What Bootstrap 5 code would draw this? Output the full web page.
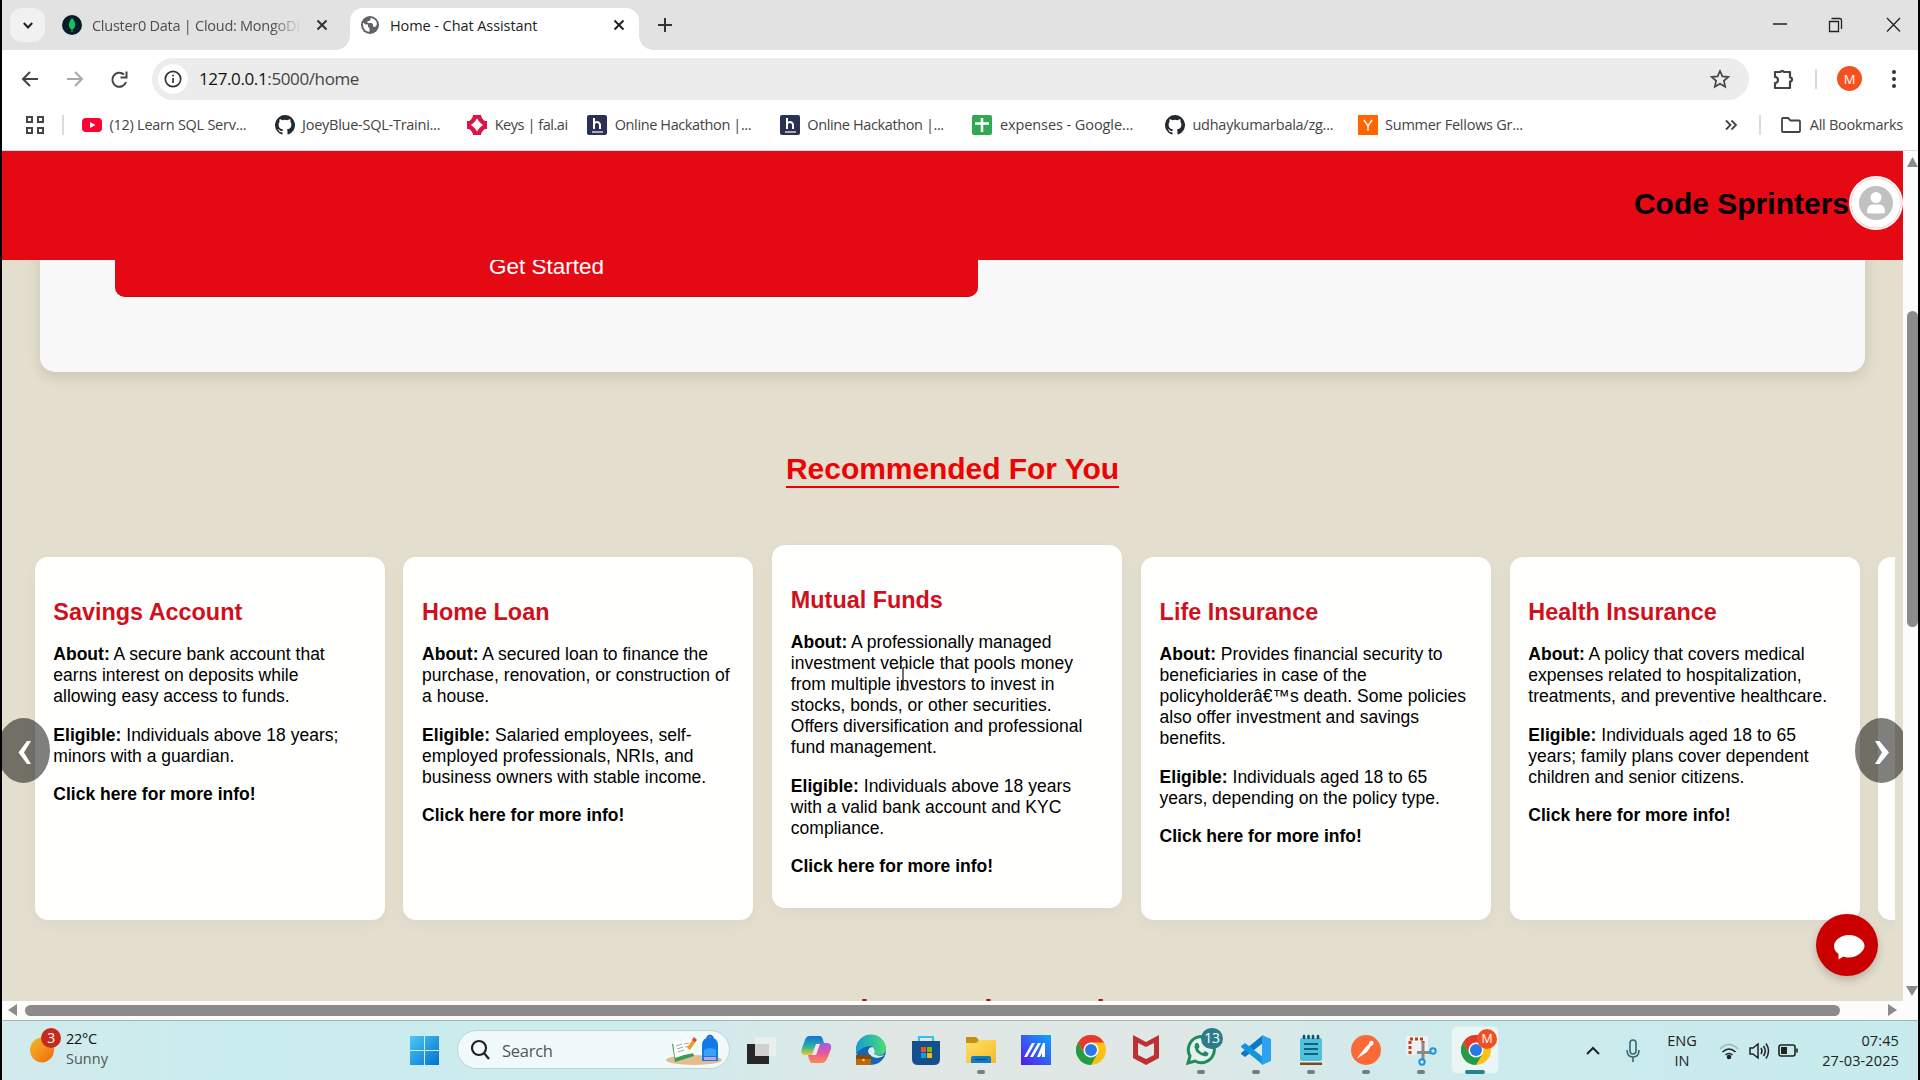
<!DOCTYPE html>
<html lang="en">
<head>
<meta charset="utf-8">
<title>Home - Chat Assistant</title>
<link rel="stylesheet" href="https://cdn.jsdelivr.net/npm/bootstrap@5.3.0/dist/css/bootstrap.min.css">
<script src="https://cdn.jsdelivr.net/npm/bootstrap@5.3.0/dist/js/bootstrap.bundle.min.js"></script>
<style>
body{width:1920px;height:1080px;overflow:hidden;background:#000;font-family:"Open Sans","Noto Sans",sans-serif;color:#333;font-size:15px;line-height:20px}
svg{display:block;flex:none;overflow:visible}
.screen{height:1080px;padding:0 2px;overflow:hidden}
.ui{font-size:14.5px;letter-spacing:-.26px;white-space:nowrap}
.tabs{height:50px;background:#e2e2e2}
.chev{width:35px;height:34px;margin:8px 0 0 8px;border-radius:12px;background:#f1f1f1}
.tab-idle{width:305px;padding-left:17px;height:34px;margin-top:8px}
.tab-title{width:210px;margin-left:10px;padding-top:1px;overflow:hidden;-webkit-mask-image:linear-gradient(90deg,#000 180px,transparent 209px);color:#4d4d4d}
.tab-on{position:relative;width:289px;height:42px;margin-top:8px;padding:0 11px 8px;background:#fff;border-radius:13px 13px 0 0;color:#222}
.tab-on span{margin-left:11px;padding-top:1px;letter-spacing:-.08px}
.tab-on:before,.tab-on:after{content:"";position:absolute;bottom:0;width:14px;height:14px}
.tab-on:before{left:-14px;background:radial-gradient(circle at 0 0,transparent 13.5px,#fff 14px)}
.tab-on:after{right:-14px;background:radial-gradient(circle at 100% 0,transparent 13.5px,#fff 14px)}
.tools{height:58px;background:#fff;padding-left:19px}
.url{width:1597px;height:42px;border-radius:21px;background:#ececec;margin-left:23px;padding:0 19px 0 6px}
.infoc{width:30px;height:30px;border-radius:50%;background:#fff}
.urltext{font-size:17px;letter-spacing:-.38px;margin-left:11px;padding-top:1px;color:#444}
.vsep{width:2px;height:20px;background:#dcdcdc}
.ava{width:25px;height:25px;border-radius:50%;background:#f4511e;color:#fff;font-size:13px}
.marks{height:43px;background:#fff;border-bottom:1px solid #ddd;color:#444;padding-bottom:7px}
.bm{width:192.6px;gap:7.5px}
.web{height:870px}
.site{width:1901px;height:850px;background:#e4dece;overflow:hidden;font-family:"Liberation Sans",Arial,sans-serif;color:#000}
.brandbar{position:relative;z-index:2;height:109px;background:#e50914;font-weight:700;font-size:30px;padding-bottom:5px}
.brandbar span{padding-top:2px}
.usr{width:54px;height:54px;border-radius:50%;background:#fff}
.hero{height:132px;width:1825px;margin:-20px 0 0 38px;padding-left:75px;background:#f8f8f9;border-radius:0 0 15px 15px;box-shadow:0 5px 14px rgba(60,70,20,.15)}
.cta{width:863px;height:57px;border-radius:10px;background:#e50914;color:#fff;font-size:22.5px;line-height:26px;padding:14px 0 15px;border:0;border-bottom:1px solid #b5101a;display:block}
.sect{font-size:30px;line-height:34px;font-weight:700;color:#ec0404;margin:0 auto;width:max-content}
.sect-main{margin-top:80px;border-bottom:2px solid #ec0000;letter-spacing:-.05px}
.strip{position:relative;height:453px;margin-top:29px}
.rail{height:453px;margin-right:8px;padding:40px 0 0 32.6px;gap:18.75px;overflow:hidden}
.prod{flex:none;width:350px;height:363px;border-radius:13px;background:#fffffd;padding:41px 18.75px 0;box-shadow:0 5px 12px rgba(190,190,190,.2);font-size:17.5px;line-height:21px}
.prod.up{transform:translateY(-12px)}
.prod h3{font-size:23.4px;line-height:28px;font-weight:700;color:#d0101c;margin:0 0 18.1px}
.prod p{margin:0 0 17.5px}
.nav-o{position:absolute;top:201px;width:53px;height:65px;border-radius:50%;background:rgba(0,0,0,.5)}
.nav-l{left:-5px}.nav-r{left:1853px}
.sect-next{margin-top:24px;color:#b00c12;letter-spacing:1.75px}
.vbar{width:15px;height:850px;background:#fcfcfc}
.hbar{height:19px;background:#fcfcfa}
.vthumb{width:11px;height:316px;border-radius:6px;background:#8b8b8b}
.hthumb{width:1815px;height:11px;border-radius:6px;background:#8b8b8b}
.chatb{position:absolute;left:1816px;top:914px;width:62px;height:62px;border-radius:50%;background:#ca0000;box-shadow:0 4px 8px rgba(0,0,0,.2);z-index:5}
.beam{position:absolute;left:896px;top:666px;z-index:5}
.task{height:60px;border-top:1px solid #98b9ba;background:linear-gradient(90deg,#d2eaec 0,#c9ecee 12%,#cdecee 32%,#e0e7e5 47%,#dfe8e6 60%,#ccebed 78%,#c7ebed 100%);color:#222}
.weather{position:relative;width:380px;padding:6px 0 0 28px}
.pill{position:absolute;border-radius:50%;color:#fff;text-align:center}
.find{width:273px;height:39px;border-radius:20px;background:#f1fafa;border:1px solid #c0d2d2;padding:0 6px 0 13px;margin:9px 0 0 18px}
.find span{font-size:16.5px;color:#555;margin-left:12px;padding-top:2px}
.app{position:relative;width:55px;height:59px;padding-top:14px}
.app.run:after{content:"";position:absolute;left:23.5px;top:49px;width:8px;height:4px;border-radius:2px;background:#6f8083}
.app.focus:before{content:"";position:absolute;left:3px;top:5px;width:48px;height:48px;border-radius:6px;background:#eaf6f6;border:1px solid #d8ecec}
.app.focus:after{left:17px;width:20px;background:#278290}
.app svg{position:relative;margin:0 auto}
.ico{width:30px;height:30px}
.clock{width:81px;margin-left:19px;letter-spacing:.12px}
</style>
</head>
<body>
<svg width="0" height="0" class="position-absolute"><defs>
<symbol id="gh" viewBox="0 0 16 16"><path fill="#24292f" d="M8 0a8 8 0 0 0-2.53 15.59c.4.07.55-.17.55-.38v-1.49C3.78 14.2 3.3 12.78 3.3 12.78c-.36-.92-.89-1.17-.89-1.17-.73-.5.05-.49.05-.49.8.06 1.23.83 1.23.83.72 1.23 1.88.87 2.34.66.07-.52.28-.87.5-1.07-1.77-.2-3.64-.89-3.64-3.95 0-.87.31-1.59.82-2.15-.08-.2-.36-1.02.08-2.12 0 0 .67-.21 2.2.82a7.6 7.6 0 0 1 4 0c1.53-1.04 2.2-.82 2.2-.82.44 1.1.16 1.92.08 2.12.51.56.82 1.27.82 2.15 0 3.07-1.87 3.75-3.65 3.95.29.25.54.73.54 1.48v2.19c0 .21.15.46.55.38A8 8 0 0 0 8 0z"/></symbol>
<symbol id="chrome" viewBox="0 0 30 30"><circle cx="15" cy="15" r="15" fill="#fbc116"/><path fill="#e33b2e" d="M2 7.5A15 15 0 0 1 28 7.5H15L8.5 18.700z"/><path fill="#249b48" d="M2 7.500A15 15 0 0 0 15 30l6.500-11.250L15 22 8.500 18.700z"/><circle cx="15" cy="15" r="7.500" fill="#fff"/><circle cx="15" cy="15" r="6" fill="#2b77e8"/></symbol>
<linearGradient id="gw" x2="1" y2="1"><stop stop-color="#4cc8f6"/><stop offset="1" stop-color="#0072ce"/></linearGradient>
<linearGradient id="gs" x2="1" y2="1"><stop stop-color="#f7b92d"/><stop offset="1" stop-color="#ec6a0c"/></linearGradient>
<linearGradient id="gc1" x2="0" y2="1"><stop stop-color="#176ee0"/><stop offset=".55" stop-color="#23b3a0"/><stop offset="1" stop-color="#f1c82b"/></linearGradient>
<linearGradient id="gc2" x2="0" y2="1"><stop stop-color="#9b5ce8"/><stop offset=".5" stop-color="#e6599c"/><stop offset="1" stop-color="#fb8d4e"/></linearGradient>
<linearGradient id="ge" x2="1" y2="0"><stop stop-color="#159ad8"/><stop offset="1" stop-color="#4ede6c"/></linearGradient>
<linearGradient id="gm" x1="0" y1="1" x2="1" y2="0"><stop stop-color="#5a18e8"/><stop offset="1" stop-color="#0aa8ff"/></linearGradient>
<linearGradient id="gf" x2="1" y2="1"><stop stop-color="#ffdf6b"/><stop offset="1" stop-color="#f6bb24"/></linearGradient>
</defs></svg>
<div class="screen d-flex flex-column">
  <div class="tabs ui d-flex flex-none">
    <div class="chev d-flex align-items-center justify-content-center"><svg width="10" height="7" fill="none" stroke="#222" stroke-width="2"><path d="M.8 1 5 5.500 9.200 1"/></svg></div>
    <div class="tab-idle d-flex align-items-center">
      <svg width="20" height="20" viewBox="0 0 20 20"><circle cx="10" cy="10" r="10" fill="#061d2a"/><path d="M10 3c5 5 3.500 10 .5 11.500V17h-1v-2.500C6.500 13 5.500 8 10 3z" fill="#13c45c"/></svg>
      <div class="tab-title">Cluster0 Data | Cloud: MongoDB</div>
      <svg width="10" height="10" style="margin-left:15px" stroke="#333" stroke-width="2"><path d="M.5.5l9 9M9.500.5l-9 9"/></svg>
    </div>
    <div class="tab-on d-flex align-items-center">
      <svg width="18" height="18" viewBox="0 0 18 18"><circle cx="9" cy="9" r="9" fill="#5f6368"/><path d="M2 6.500l2.500 2H7v2.500l1.500 1v3.800C4 15.500 1.500 12 2 6.500zM9.500 2v2L8 5H6.500v2h4L12 8.500v2l2 .5 1.500-1.500C17 6 14 2.500 9.500 2z" fill="#fff"/></svg>
      <span>Home - Chat Assistant</span>
      <svg class="ms-auto" width="10" height="10" style="margin-right:4px" stroke="#222" stroke-width="2"><path d="M.5.5l9 9M9.500.5l-9 9"/></svg>
    </div>
    <svg width="14" height="14" style="margin:18px 0 0 19px" stroke="#333" stroke-width="2"><path d="M7 0v14M0 7h14"/></svg>
    <svg width="140" height="16" class="ms-auto" style="margin:17px 13px 0 0" fill="none" stroke="#222" stroke-width="1.300"><path d="M8 7h14M64.500 4.500h9v10h-9zM66.500 1.500h8q2 0 2 2v8.500M122 1l13 13.500M135 1l-13 13.500"/></svg>
  </div>
  <div class="tools d-flex align-items-center">
    <svg width="108" height="18" fill="none" stroke="#444" stroke-width="2"><path d="M17 9H3M9 2 2 9l7 7"/><path stroke="#a8a8a8" d="M46 9h14M54 2l7 7-7 7"/><path d="M103 4.500A7 7 0 1 0 105 12M105.500 1.500v6h-6"/></svg>
    <div class="url d-flex align-items-center">
      <div class="infoc d-flex align-items-center justify-content-center"><svg width="18" height="18" fill="none" stroke="#333" stroke-width="1.700"><circle cx="9" cy="9" r="7.700"/><path d="M9 8v5M9 4.800v1.700"/></svg></div>
      <div class="urltext text-nowrap"><span style="color:#111">127.0.0.1</span>:5000/home</div>
      <svg class="ms-auto" width="20" height="20" viewBox="0 0 20 20" fill="none" stroke="#444" stroke-width="1.700"><path d="M10 2l2.400 5.400 5.900.6-4.400 3.900 1.300 5.800L10 14.700l-5.200 3 1.300-5.800L1.700 8l5.900-.6z"/></svg>
    </div>
    <svg width="21" height="21" style="margin-left:24px" fill="none" stroke="#444" stroke-width="2.200"><path d="M2 4h5.500a2 2 0 0 1 3.500 0H17v5.500a2 2 0 0 1 0 4V20H2v-5a3 3 0 0 0 0-6z" stroke-linejoin="round"/></svg>
    <div class="vsep" style="margin-left:21px"></div>
    <div class="ava d-flex align-items-center justify-content-center" style="margin-left:20px">M</div>
    <svg width="4" height="18" style="margin-left:30px" fill="#333"><circle cx="2" cy="2" r="2"/><circle cx="2" cy="9" r="2"/><circle cx="2" cy="16" r="2"/></svg>
  </div>
  <div class="marks ui d-flex align-items-center">
    <svg width="18" height="18" style="margin-left:24px" fill="none" stroke="#444" stroke-width="2"><path d="M1 1h5v5H1zM12 1h5v5h-5zM1 12h5v5H1zM12 12h5v5h-5z"/></svg>
    <div class="vsep" style="margin:0 18px"></div>
    <div class="bm d-flex align-items-center"><svg width="20" height="20"><rect y="3" width="20" height="14" rx="4" fill="#ff0033"/><path d="M8 7l5.500 3L8 13z" fill="#fff"/></svg>(12) Learn SQL Serv...</div>
    <div class="bm d-flex align-items-center"><svg width="20" height="20"><use href="#gh"/></svg>JoeyBlue-SQL-Traini...</div>
    <div class="bm d-flex align-items-center" style="width:120px;letter-spacing:-.45px"><svg width="20" height="20" viewBox="0 0 20 20"><path fill="#dd1547" fill-rule="evenodd" d="M6 0h8q.5 4 4 6h2v8h-2q-3.500 2-4 6H6q-.5-4-4-6H0V6h2q3.500-2 4-6zm4 3.500Q8 7.500 4 10q4 2.500 6 6.500 2-4 6-6.500-4-2.500-6-6.500z"/></svg>Keys | fal.ai</div>
    <div class="bm d-flex align-items-center" style="letter-spacing:-.38px"><svg width="20" height="20" fill="none" stroke="#fff" stroke-width="2"><rect width="20" height="20" rx="2" fill="#2a3152" stroke="none"/><path d="M7 3v11M7 9q1-2 3-2t3 2.500V14"/><path d="M5 17h11" stroke-width="1.200"/></svg>Online Hackathon |...</div>
    <div class="bm d-flex align-items-center" style="letter-spacing:-.38px"><svg width="20" height="20" fill="none" stroke="#fff" stroke-width="2"><rect width="20" height="20" rx="2" fill="#2a3152" stroke="none"/><path d="M7 3v11M7 9q1-2 3-2t3 2.500V14"/><path d="M5 17h11" stroke-width="1.200"/></svg>Online Hackathon |...</div>
    <div class="bm d-flex align-items-center" style="letter-spacing:-.08px"><svg width="20" height="20"><rect width="20" height="20" rx="2" fill="#31a851"/><path d="M10 3v14M3 8.500h14" stroke="#fff" stroke-width="2.500"/></svg>expenses - Google...</div>
    <div class="bm d-flex align-items-center"><svg width="20" height="20"><use href="#gh"/></svg>udhaykumarbala/zg...</div>
    <div class="bm d-flex align-items-center"><svg width="20" height="20"><rect width="20" height="20" fill="#ff6600"/><path d="M6 5l4 6 4-6M10 11v5" fill="none" stroke="#fff" stroke-width="1.400"/></svg>Summer Fellows Gr...</div>
    <svg width="12" height="10" class="ms-auto" fill="none" stroke="#444" stroke-width="1.800"><path d="M1 .5 5.500 5 1 9.500M6.500.5 11 5l-4.500 4.500"/></svg>
    <div class="vsep" style="margin:0 20px 0 22px"></div>
    <svg width="20" height="16" fill="none" stroke="#444" stroke-width="1.800"><path d="M1 2q0-1 1-1h5l2.500 2.500H18q1 0 1 1V14q0 1-1 1H2q-1 0-1-1z"/></svg>
    <span style="margin:0 15px 0 9px">All Bookmarks</span>
  </div>
  <div class="web d-flex flex-column">
    <div class="d-flex">
      <main class="site">
        <header class="brandbar d-flex align-items-center justify-content-end"><span>Code Sprinters</span>
          <div class="usr"><svg width="54" height="54"><circle cx="27" cy="27" r="25" fill="none" stroke="#f5b5b8" stroke-width=".7"/><circle cx="27" cy="27" r="17" fill="#c1c1c1"/><circle cx="27" cy="21.500" r="5.500" fill="#fff"/><path d="M18 37q-.5-8.500 6-8.500h6q6.500 0 6 8.500-9 1-18 0z" fill="#fff"/></svg></div>
        </header>
        <section class="hero"><button class="cta text-center">Get Started</button></section>
        <h2 class="sect sect-main">Recommended For You</h2>
        <div class="strip">
          <div class="rail d-flex">
            <article class="prod"><h3>Savings Account</h3><p><b>About:</b> A secure bank account that earns interest on deposits while allowing easy access to funds.</p><p><b>Eligible:</b> Individuals above 18 years; minors with a guardian.</p><p><b>Click here for more info!</b></p></article>
            <article class="prod"><h3>Home Loan</h3><p><b>About:</b> A secured loan to finance the purchase, renovation, or construction of a house.</p><p><b>Eligible:</b> Salaried employees, self-employed professionals, NRIs, and business owners with stable income.</p><p><b>Click here for more info!</b></p></article>
            <article class="prod up"><h3>Mutual Funds</h3><p><b>About:</b> A professionally managed investment vehicle that pools money from multiple investors to invest in stocks, bonds, or other securities. Offers diversification and professional fund management.</p><p><b>Eligible:</b> Individuals above 18 years with a valid bank account and KYC compliance.</p><p><b>Click here for more info!</b></p></article>
            <article class="prod"><h3>Life Insurance</h3><p><b>About:</b> Provides financial security to beneficiaries in case of the policyholderâ€™s death. Some policies also offer investment and savings benefits.</p><p><b>Eligible:</b> Individuals aged 18 to 65 years, depending on the policy type.</p><p><b>Click here for more info!</b></p></article>
            <article class="prod"><h3>Health Insurance</h3><p><b>About:</b> A policy that covers medical expenses related to hospitalization, treatments, and preventive healthcare.</p><p><b>Eligible:</b> Individuals aged 18 to 65 years; family plans cover dependent children and senior citizens.</p><p><b>Click here for more info!</b></p></article>
            <article class="prod"></article>
          </div>
          <div class="nav-o nav-l"><svg width="53" height="65"><path d="M30 23h4L27 34.500l7 11.500h-4L21.500 34.500z" fill="#fff"/></svg></div>
          <div class="nav-o nav-r"><svg width="53" height="65"><path d="M24.500 23h-4.500L27 34.500l-7 11.500h4.500L34 34.500z" fill="#fff"/></svg></div>
        </div>
        <h2 class="sect sect-next">Trendy Brands Hotels</h2>
      </main>
      <div class="vbar d-flex flex-column align-items-center"><svg width="11" height="10" style="margin:6px 0 0 3px" fill="#8b8b8b"><path d="M5.500 0 11 10H0z"/></svg><div class="vthumb" style="margin:144px 0 0 4px"></div><svg width="12" height="10" class="mt-auto" style="margin:0 0 5px 2px" fill="#8b8b8b"><path d="M0 0h12L6 10z"/></svg></div>
    </div>
    <div class="hbar d-flex align-items-center"><svg width="10" height="12" style="margin:0 7px 0 6px" fill="#8b8b8b"><path d="M9 0v12L0 6z"/></svg><div class="hthumb"></div><svg width="10" height="12" style="margin-left:48px" fill="#8b8b8b"><path d="M0 0v12l9-6z"/></svg></div>
  </div>
  <div class="task ui d-flex">
    <div class="weather d-flex">
      <svg width="24" height="30" style="margin-top:8px"><ellipse cx="12" cy="15" rx="12" ry="12.500" fill="url(#gs)"/></svg>
      <span class="pill" style="left:39px;top:7px;width:20px;height:20px;background:#c42b1c;font-size:14px;line-height:19px">3</span>
      <div style="margin:2px 0 0 12px"><div style="color:#111">22°C</div><div style="color:#555;letter-spacing:0">Sunny</div></div>
    </div>
    <svg width="29" height="29" style="margin:15px 0 0 28px" fill="url(#gw)"><path d="M0 0h14v14H0zM15 0h14v14H15zM0 15h14v14H0zM15 15h14v14H15z"/></svg>
    <div class="find d-flex align-items-center">
      <svg width="19" height="20" fill="none" stroke="#222" stroke-width="2.200"><circle cx="8" cy="8" r="7"/><path d="M13 13l5 6"/></svg><span>Search</span>
      <svg class="ms-auto" width="57" height="30" viewBox="0 0 57 30"><ellipse cx="28" cy="25" rx="28" ry="5" fill="#e5bd8d"/><path d="M6 9l17-4 5 16-19 6z" fill="#3b9a55"/><path d="M7 7l8-1 9-3 4 15-10 2-9 3z" fill="#fff"/><path d="M10 11l6-2M11 14l6-2M18 9l5-1M19 12l5-1M12 17l6-2" stroke="#9aa" /><path d="M21 13 27 4l3 2-6 9z" fill="#f59a23"/><path d="M26 5l2-3 3 3-2 2z" fill="#e0443b"/><path d="M36 26V10q0-7 8-8 8 1 8 8v16z" fill="#1279e8"/><path d="M38 15q6-4 12 0v6H38z" fill="#39a2f8"/><path d="M38 22h12v3H38z" fill="#b6a7f5"/><path d="M41 3q3-5 6 0" stroke="#2a5fb8" stroke-width="2" fill="none"/></svg>
    </div>
    <div class="d-flex" style="margin-left:3px">
      <div class="app"><svg class="ico"><path d="M1 9h22v20H1z" fill="#272727"/><path d="M9 2h21v19H9z" fill="#eee" opacity=".85"/></svg></div>
      <div class="app"><svg class="ico" viewBox="0 0 30 30"><path fill="url(#gc1)" d="M9 1h10q2 0 3 4l1 3h-3q-3 0-4 3l-3 9H3Q-1 20 1 13l3-8Q5 1 9 1z"/><path fill="url(#gc2)" d="M21 28H11q-2 0-3-4l-1-4h4q3 0 4-3l2-9h9q5 0 4 6l-4 10q-2 4-5 4z"/><path d="M15 9h4l-4 11h-4z" fill="#f3e8ef"/></svg></div>
      <div class="app"><svg class="ico" viewBox="0 0 30 30"><circle cx="15" cy="15" r="15" fill="#1466b5"/><path fill="url(#ge)" d="M0 15A15 15 0 0 1 30 14q0 6-7 6-5 0-5-2 2-6-3-7Q6 11 0 19z"/><path d="M12 17q0-5 5-5 3 4 1 7 4 3 11 1-4 3-8 3-7-1-9-6z" fill="#d9eef2"/><path d="M0 20h15v10H0z" fill="#b96a0c"/><path d="M0 20h15v4H0z" fill="#8c4a08"/><circle cx="7.500" cy="25" r="1.300" fill="#ffd45c"/></svg></div>
      <div class="app"><svg class="ico"><path d="M8 6V2h14v4" fill="none" stroke="#36c0f4" stroke-width="2.200"/><path d="M1 6h28v18q0 6-6 6H7q-6 0-6-6z" fill="#15508c"/><path d="M10 12h5v5h-5z" fill="#f25022"/><path d="M16 12h5v5h-5z" fill="#7fba00"/><path d="M10 18h5v5h-5z" fill="#00a4ef"/><path d="M16 18h5v5h-5z" fill="#ffb900"/></svg></div>
      <div class="app run"><svg class="ico"><path d="M0 2h10l3 3v6H0z" fill="#c48f0e"/><path d="M0 8h10l3-3h17v23H0z" fill="url(#gf)"/><path d="M5 28v-5q0-2 2-2h16q2 0 2 2v5z" fill="#127bc8"/><path d="M9 24.500h12" stroke="#0b4f87" stroke-width="1.500"/></svg></div>
      <div class="app"><svg class="ico"><path d="M0 0h30v30H0z" fill="url(#gm)"/><path d="M3 22h3l8-14h-3zM9 22h3l8-14h-3zM16 22h3l2-4v4h3V8h-2z" fill="#fff"/></svg></div>
      <div class="app"><svg class="ico"><use href="#chrome"/></svg></div>
      <div class="app"><svg class="ico"><path d="M2 0l13 7L28 0v23l-13 7L2 23zM7 8v12l8 4 8-4V8l-8 4z" fill="#bd3034" fill-rule="evenodd"/></svg></div>
      <div class="app run"><svg class="ico" viewBox="0 0 30 30"><path d="M2 28l2-7A13 13 0 1 1 9 26z" fill="#e6f1ee" stroke="#228b5a" stroke-width="3"/><path d="M10 8q2-1 3 2l.5 2-1.500 2q2 3 5 4l2-2 3.500 2q0 3-3 3.500Q10 20 8.500 12 8.500 9 10 8z" fill="#228b5a"/></svg><span class="pill" style="left:28px;top:7px;width:22px;height:21px;border-radius:11px;background:#2b7d8c;font-size:14px;line-height:20px">13</span></div>
      <div class="app run"><svg class="ico" viewBox="0 0 30 30"><path d="M22 0v8L4 22l-4-3v-1z" fill="#0b78c4"/><path d="M22 30v-8L4 8l-4 3v1z" fill="#1794de"/><path d="M21 0l9 4v22l-9 4z" fill="#2ba3ee"/></svg></div>
      <div class="app run"><svg class="ico" viewBox="0 0 30 30"><path d="M4 25h22v5H4z" fill="#7a4a21"/><path d="M4 25h22v2.500H4z" fill="#eee"/><rect x="4" y="3" width="22" height="23" rx="2" fill="#50c1dd"/><path d="M8 9h14M8 14h14M8 19h14" stroke="#125f7d" stroke-width="2"/><path d="M8 1v2M12.500 1v2M17 1v2M22 1v2" stroke="#164f69" stroke-width="2.600" stroke-linecap="round"/></svg></div>
      <div class="app run"><svg class="ico"><circle cx="15" cy="15" r="15" fill="#fb6a36"/><path d="M6 23l8-10 4-4q0-4 4-3 2 3-2 5l-4 6-9 6z" fill="#fff"/></svg></div>
      <div class="app run"><svg class="ico"><path d="M0 1h22v19H0z" fill="#eef2f2"/><path d="M4 19V4h13v4" fill="none" stroke="#c33c1e" stroke-width="3" stroke-dasharray="3 2"/><path d="M17 7v18M11 17.500h14" stroke="#888" stroke-width="3"/><circle cx="27" cy="16" r="2.700" fill="none" stroke="#1b97de" stroke-width="2"/><circle cx="16" cy="27" r="2.700" fill="none" stroke="#1b97de" stroke-width="2"/></svg></div>
      <div class="app run focus"><svg class="ico"><use href="#chrome"/></svg><span class="pill" style="left:29px;top:8px;width:20px;height:20px;background:#f0501f;font-size:12.500px;line-height:20px">M</span></div>
    </div>
    <div class="d-flex align-items-center ms-auto" style="padding-right:19px">
      <svg width="14" height="9" fill="none" stroke="#222" stroke-width="2"><path d="M1 8l6-6 6 6"/></svg>
      <svg width="14" height="24" style="margin:0 26px" fill="none" stroke="#35686e" stroke-width="1.600"><rect x="4" y="1" width="6" height="14" rx="3"/><path d="M1 11q0 7 6 7t6-7M7 18v5"/></svg>
      <div class="text-center" style="width:32px;line-height:20px;margin-right:21px;letter-spacing:0">ENG<br>IN</div>
      <svg width="20" height="16" fill="none" stroke="#222" stroke-width="1.600"><path d="M1 6q9-9 18 0" stroke="#9cb4b6"/><path d="M3.500 9q6.500-6 13 0M6.500 12q3.500-3 7 0"/><circle cx="10" cy="14" r="1.500" fill="#222"/></svg>
      <svg width="20" height="18" style="margin:0 9px 0 10px" fill="none" stroke="#222" stroke-width="1.500"><path d="M1 6h3l5-4v14l-5-4H1zM12 6q2 3 0 6M14.500 4q3.500 5 0 10M17 1.500q5 7.500 0 15"/></svg>
      <svg width="21" height="13" fill="none" stroke="#222" stroke-width="1.600"><rect x="1" y="1" width="16" height="11" rx="2"/><path d="M3 3h6v7H3z" fill="#222" stroke="none"/><path d="M19 4.500v4"/></svg>
      <div class="clock text-end">07:45<br>27-03-2025</div>
    </div>
  </div>
</div>
<div class="chatb"><svg width="62" height="62"><path d="M33 21c9 0 15.500 6 15.500 11S41 43.500 33 43.500c-2 0-4-.4-5.500-1l-5 3v-5.500c-3-2-4.500-5-4.500-8C18 27 24 21 33 21z" fill="#fff"/></svg></div>
<svg class="beam" width="14" height="25" fill="none" stroke="#111" stroke-width="1.200"><path d="M7 2v21" /><path d="M1 1h4l2 1 2-1h4M1 24h4l2-1 2 1h4" stroke-dasharray="2 1"/></svg>
</body>
</html>
